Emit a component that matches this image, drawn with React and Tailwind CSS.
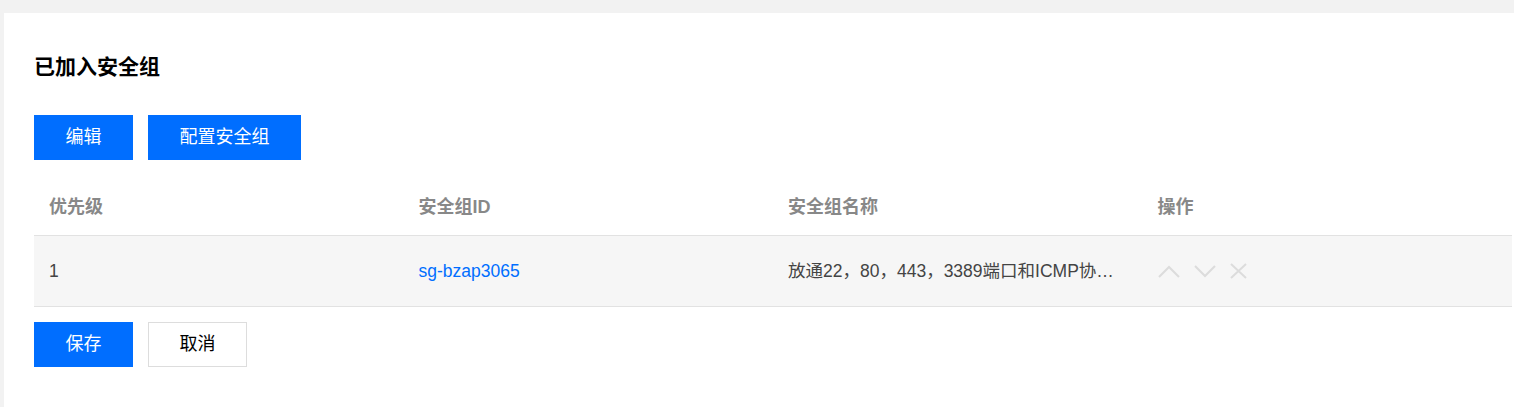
const FONT = { fontFamily: '"Liberation Sans", Arial, "Noto Sans CJK SC", sans-serif' }

function ChevronUp() {
  return (
    <svg width="22" height="13" viewBox="0 0 22 13" fill="none" stroke="#dcdcdc" strokeWidth="2">
      <path d="M1 12 L11 2 L21 12" />
    </svg>
  )
}

function ChevronDown() {
  return (
    <svg width="22" height="13" viewBox="0 0 22 13" fill="none" stroke="#dcdcdc" strokeWidth="2">
      <path d="M1 1 L11 11 L21 1" />
    </svg>
  )
}

function Cross() {
  return (
    <svg width="17" height="16" viewBox="0 0 17 16" fill="none" stroke="#dcdcdc" strokeWidth="2">
      <path d="M1 1 L16 15 M16 1 L1 15" />
    </svg>
  )
}

export default function App() {
  return (
    <div className="min-h-screen bg-[#f2f2f2] pt-[13px] pl-[4px]" style={FONT}>
      <div className="bg-white h-[394px] pl-[30px] pr-[2px] pt-[40px]">
        <h1 className="text-[21px] leading-[28px] font-bold text-black">已加入安全组</h1>

        {/* Toolbar */}
        <div className="flex gap-[15px] mt-[34px]">
          <button className="w-[99px] h-[45px] bg-[#006eff] text-white text-[18px]">编辑</button>
          <button className="w-[153px] h-[45px] bg-[#006eff] text-white text-[18px]">配置安全组</button>
        </div>

        {/* Table */}
        <div className="mt-[20px]">
          <div className="grid grid-cols-4 h-[56px] items-center border-b border-[#e2e2e2] text-[18px] font-bold text-[#888]">
            <div className="pl-[15px]">优先级</div>
            <div className="pl-[15px]">安全组ID</div>
            <div className="pl-[15px]">安全组名称</div>
            <div className="pl-[15px]">操作</div>
          </div>
          <div className="grid grid-cols-4 h-[71px] items-center bg-[#f6f6f6] border-b border-[#e2e2e2] text-[17.5px] text-[#444]">
            <div className="pl-[15px]">1</div>
            <div className="pl-[15px] text-[#006eff]">sg-bzap3065</div>
            <div className="pl-[15px] whitespace-nowrap overflow-hidden">放通22，80，443，3389端口和ICMP协…</div>
            <div className="pl-[15px] flex items-center gap-[14px]">
              <ChevronUp />
              <ChevronDown />
              <Cross />
            </div>
          </div>
        </div>

        {/* Footer */}
        <div className="flex gap-[15px] mt-[15px]">
          <button className="w-[99px] h-[45px] bg-[#006eff] text-white text-[18px]">保存</button>
          <button className="w-[99px] h-[45px] bg-white border border-[#dddddd] text-black text-[18px]">取消</button>
        </div>
      </div>
    </div>
  )
}
